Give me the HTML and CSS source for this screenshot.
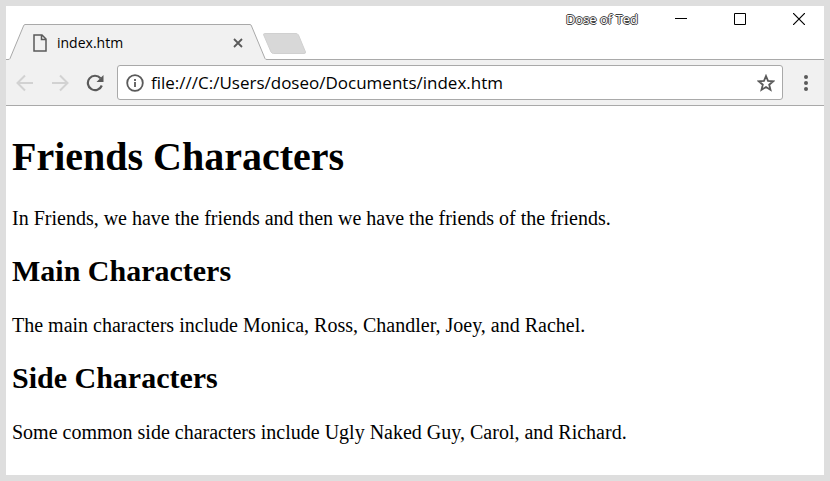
FILE: index.html
```
<!DOCTYPE html>
<html lang="en">
<head>
    <meta charset="UTF-8">
    <meta name="viewport" content="width=device-width, initial-scale=1.0">
    <title>index.htm</title>
    <link rel="stylesheet" href="styles.css">
</head>
<body>
    <div class="window">
        <!-- Tab strip and window controls -->
        <header class="titlebar">
            <div class="tab">
                <svg class="tab-edge" width="19" height="36" viewBox="0 0 19 36">
                    <path d="M0 36V35.5H2Q3.500 35.500 4 34.500L17.500 2Q18 .5 19 .5V36Z" fill="#f1f1f1"/>
                    <path d="M0 35.500H2Q3.500 35.500 4 34.500L17.500 2Q18 .5 19 .5" fill="none" stroke="#a9a9a9"/>
                </svg>
                <div class="tab-body">
                    <svg width="14" height="18" viewBox="0 0 14 18" fill="none" stroke="#5a5a5a" stroke-width="1.500">
                        <path d="M1 1H9L13 5V17H1ZM8.500 1V5.500H13"/>
                    </svg>
                    <span class="tab-title">index.htm</span>
                    <button class="tab-close" aria-label="Close tab">
                        <svg width="10" height="10" viewBox="0 0 10 10" stroke="#5a5a5a" stroke-width="1.800">
                            <path d="M1 1L9 9M9 1L1 9"/>
                        </svg>
                    </button>
                </div>
                <svg class="tab-edge" width="17" height="36" viewBox="0 0 17 36">
                    <path d="M0 36V.5Q1 .5 1.500 2L15 34.500Q15.500 35.500 17 35.500V36Z" fill="#f1f1f1"/>
                    <path d="M0 .5Q1 .5 1.500 2L15 34.500Q15.500 35.500 17 35.500" fill="none" stroke="#a9a9a9"/>
                </svg>
            </div>
            <button class="new-tab" aria-label="New tab">
                <svg width="43" height="21" viewBox="0 0 43 21">
                    <path d="M1.500 .5H33Q34.500 .5 35.500 2L42.500 19Q42.800 20.500 41 20.500H10.500Q9 20.500 8 19L.7 2Q.3 .5 1.500 .5Z" fill="#d8d8d8" stroke="#d0d0d0"/>
                </svg>
            </button>
            <div class="controls">
                <span class="profile">Dose of Ted</span>
                <button aria-label="Minimize">
                    <svg width="12" height="12" viewBox="0 0 12 12"><path d="M0 5.500H12" stroke="#000"/></svg>
                </button>
                <button aria-label="Maximize">
                    <svg width="12" height="12" viewBox="0 0 12 12"><path d="M.5 .5H11.500V11.500H.5Z" fill="none" stroke="#000"/></svg>
                </button>
                <button aria-label="Close">
                    <svg width="12" height="12" viewBox="0 0 12 12"><path d="M0 0L12 12M12 0L0 12" stroke="#000" stroke-width="1.200"/></svg>
                </button>
            </div>
        </header>

        <!-- Toolbar -->
        <nav class="toolbar">
            <button class="tool" aria-label="Back" disabled>
                <svg width="18" height="18" viewBox="0 0 18 18" fill="none" stroke="#d2d2d2" stroke-width="2">
                    <path d="M17 9H2M9 1.500L1.500 9L9 16.500"/>
                </svg>
            </button>
            <button class="tool" aria-label="Forward" disabled>
                <svg width="18" height="18" viewBox="0 0 18 18" fill="none" stroke="#d2d2d2" stroke-width="2">
                    <path d="M1 9H16M9 1.500L16.500 9L9 16.500"/>
                </svg>
            </button>
            <button class="tool" aria-label="Reload">
                <svg width="18" height="18" viewBox="0 0 18 18">
                    <path d="M15.800 11.500A7.200 7.200 0 1 1 14.500 4.200" fill="none" stroke="#5a5a5a" stroke-width="2.200"/>
                    <path d="M17.500 1V8H10.500Z" fill="#5a5a5a"/>
                </svg>
            </button>
            <div class="omnibox">
                <svg width="18" height="18" viewBox="0 0 18 18">
                    <circle cx="9" cy="9" r="7.800" fill="none" stroke="#5a5a5a" stroke-width="1.800"/>
                    <path d="M9 8V13M9 5V7" stroke="#5a5a5a" stroke-width="1.800"/>
                </svg>
                <input class="address" type="text" aria-label="Address" value="file:///C:/Users/doseo/Documents/index.htm">
                <button class="star" aria-label="Bookmark this page">
                    <svg width="18" height="18" viewBox="0 0 18 18">
                        <path d="M9 2L11 6.900L16.300 7.300L12.200 10.700L13.500 15.800L9 13L4.500 15.800L5.800 10.700L1.700 7.300L7 6.900Z" fill="none" stroke="#5a5a5a" stroke-width="1.800"/>
                    </svg>
                </button>
            </div>
            <button class="menu" aria-label="Menu">
                <svg width="4" height="18" viewBox="0 0 4 18" fill="#5a5a5a">
                    <circle cx="2" cy="3" r="2"/>
                    <circle cx="2" cy="9" r="2"/>
                    <circle cx="2" cy="15" r="2"/>
                </svg>
            </button>
        </nav>

        <!-- Page -->
        <main class="page">
            <h1>Friends Characters</h1>
            <p>In Friends, we have the friends and then we have the friends of the friends.</p>
            <h2>Main Characters</h2>
            <p>The main characters include Monica, Ross, Chandler, Joey, and Rachel.</p>
            <h2>Side Characters</h2>
            <p>Some common side characters include Ugly Naked Guy, Carol, and Richard.</p>
        </main>
    </div>
</body>
</html>
```
FILE: styles.css
```
* {
    box-sizing: border-box;
}

body {
    margin: 0;
    min-height: 100vh;
    padding: 6px;
    display: flex;
    background-color: #dedede;
    font-family: "Open Sans", sans-serif;
}

button {
    display: flex;
    align-items: center;
    justify-content: center;
    padding: 0;
    border: none;
    background: none;
}

svg {
    display: block;
    flex-shrink: 0;
}

.window {
    flex: 1;
    min-width: 0;
    background-color: #ffffff;
}

/* Tab strip */
.titlebar {
    display: flex;
    align-items: flex-end;
    height: 54px;
    border-bottom: 1px solid #a9a9a9;
}

.tab {
    display: flex;
    height: 36px;
    margin-bottom: -1px;
}

.tab-body {
    display: flex;
    align-items: center;
    width: 225px;
    padding: 0 7px 0 8px;
    border-top: 1px solid #a9a9a9;
    background-color: #f1f1f1;
}

.tab-title {
    flex: 1;
    margin-left: 10px;
    font-size: 14px;
}

.new-tab {
    margin: 0 0 5px -4px;
}

/* Window controls */
.controls {
    display: flex;
    align-items: center;
    align-self: flex-start;
    gap: 9px;
    height: 26px;
    margin-left: auto;
}

.controls button {
    width: 50px;
    height: 26px;
}

.profile {
    margin-right: 9px;
    font-size: 13px;
    color: #ffffff;
    text-shadow: 1px 0 #444, -1px 0 #444, 0 1px #444, 0 -1px #444;
}

/* Toolbar */
.toolbar {
    display: flex;
    align-items: center;
    padding: 5px 0 5px 1px;
    border-bottom: 1px solid #a9a9a9;
    background-color: #f1f1f1;
}

.tool {
    width: 35px;
    height: 35px;
}

.omnibox {
    display: flex;
    flex: 1;
    align-items: center;
    height: 35px;
    margin: 0 5px;
    padding: 0 7px 0 8px;
    border: 1px solid #a9a9a9;
    border-radius: 3px;
    background-color: #ffffff;
}

.address {
    flex: 1;
    min-width: 0;
    margin: 0 7px;
    padding: 0;
    border: none;
    outline: none;
    font-family: inherit;
    font-size: 17px;
    color: #000000;
}

.menu {
    width: 36px;
    height: 35px;
}

/* Page content */
.page {
    display: flow-root;
    padding: 0 6px;
    font-family: "Liberation Serif", "Times New Roman", serif;
    font-size: 20px;
    color: #000000;
}

h1 {
    margin: 27px 0;
    font-size: 40px;
}

h2 {
    margin: 24px 0 26px;
    font-size: 30px;
}

p {
    margin: 20px 0;
}
```
